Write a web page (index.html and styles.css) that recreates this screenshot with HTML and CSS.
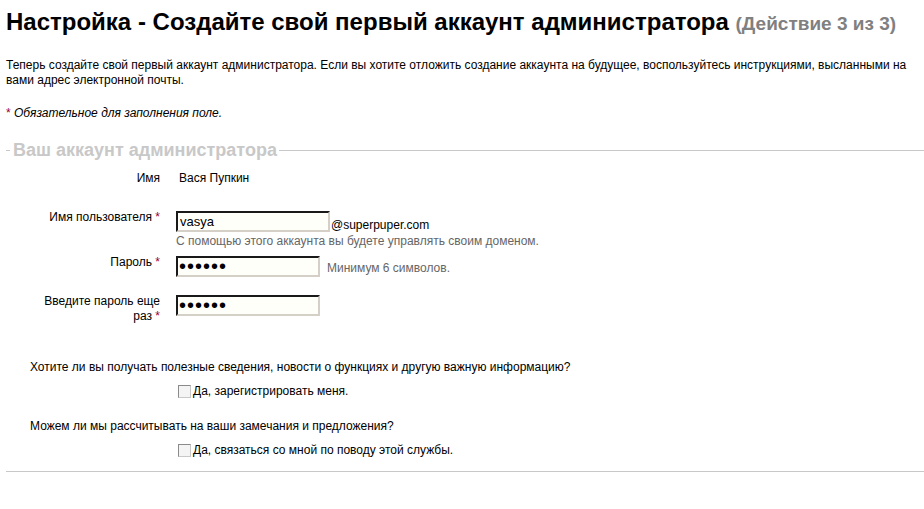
FILE: index.html
```html
<!DOCTYPE html>
<html lang="ru">
<head>
    <meta charset="UTF-8">
    <title>Настройка - Создайте свой первый аккаунт администратора</title>
    <link rel="stylesheet" href="styles.css">
</head>
<body>

    <h1 class="title">Настройка - Создайте свой первый аккаунт администратора <span class="step">(Действие 3 из 3)</span></h1>

    <p class="intro">Теперь создайте свой первый аккаунт администратора. Если вы хотите отложить создание аккаунта на будущее, воспользуйтесь инструкциями, высланными на вами адрес электронной почты.</p>

    <p class="required"><span class="req">*</span> <em>Обязательное для заполнения поле.</em></p>

    <fieldset class="account">
        <legend>Ваш аккаунт администратора</legend>

        <!-- Имя -->
        <div class="row row-name">
            <div class="label">Имя</div>
            <div class="field">Вася Пупкин</div>
        </div>

        <!-- Имя пользователя -->
        <div class="row row-user">
            <div class="label">Имя пользователя <span class="req">*</span></div>
            <div class="field">
                <div class="line"><input type="text" class="text-input" value="vasya"><span class="domain">@superpuper.com</span></div>
                <div class="hint">С помощью этого аккаунта вы будете управлять своим доменом.</div>
            </div>
        </div>

        <!-- Пароль -->
        <div class="row row-pass">
            <div class="label">Пароль <span class="req">*</span></div>
            <div class="field">
                <div class="line"><input type="password" class="text-input short" value="123456"><span class="hint inline">Минимум 6 символов.</span></div>
            </div>
        </div>

        <div class="row row-pass2">
            <div class="label">Введите пароль еще раз&nbsp;<span class="req">*</span></div>
            <div class="field">
                <input type="password" class="text-input short" value="123456">
            </div>
        </div>

        <p class="question q-news">Хотите ли вы получать полезные сведения, новости о функциях и другую важную информацию?</p>
        <label class="check"><input type="checkbox"> Да, зарегистрировать меня.</label>

        <p class="question q-feedback">Можем ли мы рассчитывать на ваши замечания и предложения?</p>
        <label class="check"><input type="checkbox"> Да, связаться со мной по поводу этой службы.</label>
    </fieldset>

</body>
</html>
```

FILE: styles.css
```css
body {
    font-family: 'Liberation Sans', Arial, sans-serif;
    font-size: 12px;
    color: #000;
    background-color: #fff;
    margin: 0;
    padding: 0 0 0 6px;
}
.title {
    font-size: 24px;
    line-height: 26px;
    font-weight: bold;
    margin: 9px 0 0 0;
    white-space: nowrap;
}
.step {
    font-size: 19px;
    color: #808080;
}
.intro {
    line-height: 15px;
    margin: 21px 0 0 0;
}
.required {
    line-height: 15px;
    margin: 18px 0 0 0;
}
.req {
    color: #990033;
}
/* блок с полями аккаунта */
.account {
    margin: 19px 0 0 0;
    padding: 0 0 13px 0;
    border: none;
    border-top: 1px solid #c8c8c8;
    border-bottom: 1px solid #c8c8c8;
    min-width: 0;
}
.account legend {
    font-size: 18px;
    line-height: 20px;
    font-weight: bold;
    color: #c8c8c8;
    margin-left: 4px;
    padding: 0 2px 0 3px;
}
.row {
    display: flex;
    align-items: flex-start;
    line-height: 15px;
}
.label {
    width: 120px;
    padding-left: 34px;
    text-align: right;
}
.field {
    margin-left: 16px;
}
.row-name {
    margin-top: 11px;
}
.row-name .field {
    margin-left: 19px;
}
.row-user {
    margin-top: 24px;
}
.row-pass {
    margin-top: 6px;
}
.row-pass2 {
    margin-top: 17px;
}
.line {
    display: flex;
    align-items: flex-end;
}
.text-input {
    display: block;
    box-sizing: border-box;
    width: 154px;
    height: 21px;
    margin: 1px 0 0 0;
    padding: 0 2px;
    font-family: 'Liberation Sans', Arial, sans-serif;
    font-size: 13px;
    border: 2px inset #d4d0c8;
    border-top-color: #6e6e6e;
    border-left-color: #6e6e6e;
    background-color: #fffffa;
    outline: none;
}
.text-input.short {
    width: 144px;
}
input[type="password"] {
    font-size: 20px;
    letter-spacing: 1px;
    padding: 0 1px;
}
.domain {
    margin-left: 1px;
    margin-bottom: -1px;
}
.hint {
    color: #666;
    margin-top: 2px;
}
.hint.inline {
    margin: 0 0 1px 7px;
}
.question {
    line-height: 15px;
    margin: 36px 0 0 24px;
}
.q-feedback {
    margin-top: 20px;
}
.check {
    display: flex;
    align-items: center;
    line-height: 15px;
    margin: 9px 0 0 172px;
}
.q-feedback + .check {
    margin-top: 9px;
}
.check input {
    appearance: none;
    width: 13px;
    height: 13px;
    margin: 0 2px 0 0;
    border: 1px solid #8a8a8a;
    border-right-color: #c8c8c8;
    border-bottom-color: #c8c8c8;
    background-color: #f4f4f4;
}
```
